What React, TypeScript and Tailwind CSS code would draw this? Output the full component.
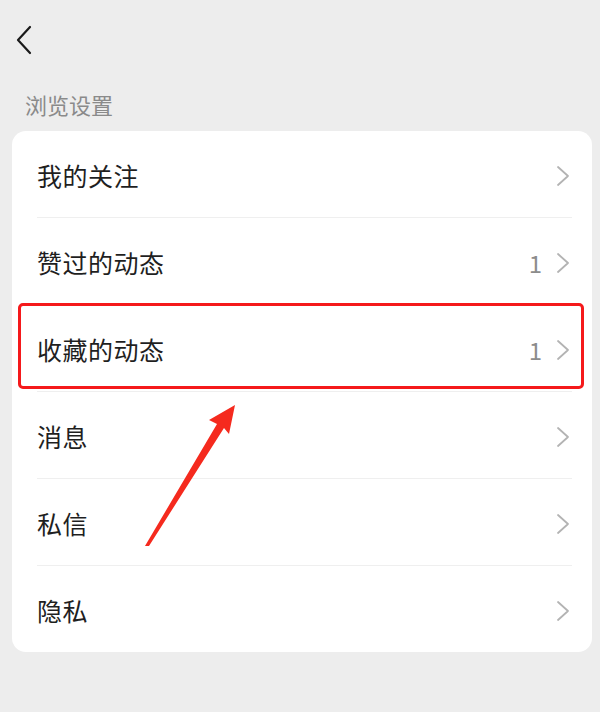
import { Fragment } from 'react';

type Row = { label: string; count?: string };

const rows: Row[] = [
  { label: '我的关注' },
  { label: '赞过的动态', count: '1' },
  { label: '收藏的动态', count: '1' },
  { label: '消息' },
  { label: '私信' },
  { label: '隐私' },
];

const font = { fontFamily: '"Noto Sans CJK SC", "Noto Sans", sans-serif' };

function Chevron() {
  return (
    <svg width="14" height="22" viewBox="0 0 14 22" fill="none">
      <path d="M2 2 L12 11 L2 20" stroke="#b3b3b3" strokeWidth="1.8" strokeLinecap="round" strokeLinejoin="round" />
    </svg>
  );
}

export default function App() {
  return (
    <div className="w-[600px] h-[712px] bg-[#ededed] overflow-hidden" style={font}>
      {/* Header */}
      <div className="h-[88px] pl-[15px] pt-[25px]">
        <svg width="18" height="30" viewBox="0 0 18 30" fill="none">
          <path d="M15 2 L3 15 L15 28" stroke="#1a1a1a" strokeWidth="2.2" strokeLinecap="round" strokeLinejoin="round" />
        </svg>
      </div>

      <div className="pl-[25px] text-[22px] leading-[32px] text-[#8a8a8a] mb-[11px]">浏览设置</div>

      {/* Card */}
      <div className="relative mx-[12px] w-[580px] bg-white rounded-[14px]">
        {rows.map((row, i) => (
          <Fragment key={row.label}>
            {i > 0 && <div className="ml-[25px] mr-[20px] h-px bg-[#efefef]" />}
            <div className="h-[86px] flex items-center pl-[25px] pr-[22px] pt-[3px]">
              <span className="flex-1 text-[25px] text-[#1f1f1f] tracking-[0.5px]">{row.label}</span>
              {row.count && <span className="text-[24px] text-[#8c8c8c] mr-[14px]">{row.count}</span>}
              <Chevron />
            </div>
          </Fragment>
        ))}

        {/* Highlight box */}
        <div className="absolute left-[6px] top-[172px] w-[566px] h-[86px] border-[3px] border-[#f5191b] rounded-[5px]" />
      </div>

      {/* Arrow */}
      <svg className="absolute left-0 top-0" width="600" height="712" viewBox="0 0 600 712">
        <polygon
          points="235,405 209,420 217,424 145,546 149,546 224,428 229,434"
          fill="#f52a1e"
        />
      </svg>
    </div>
  );
}
